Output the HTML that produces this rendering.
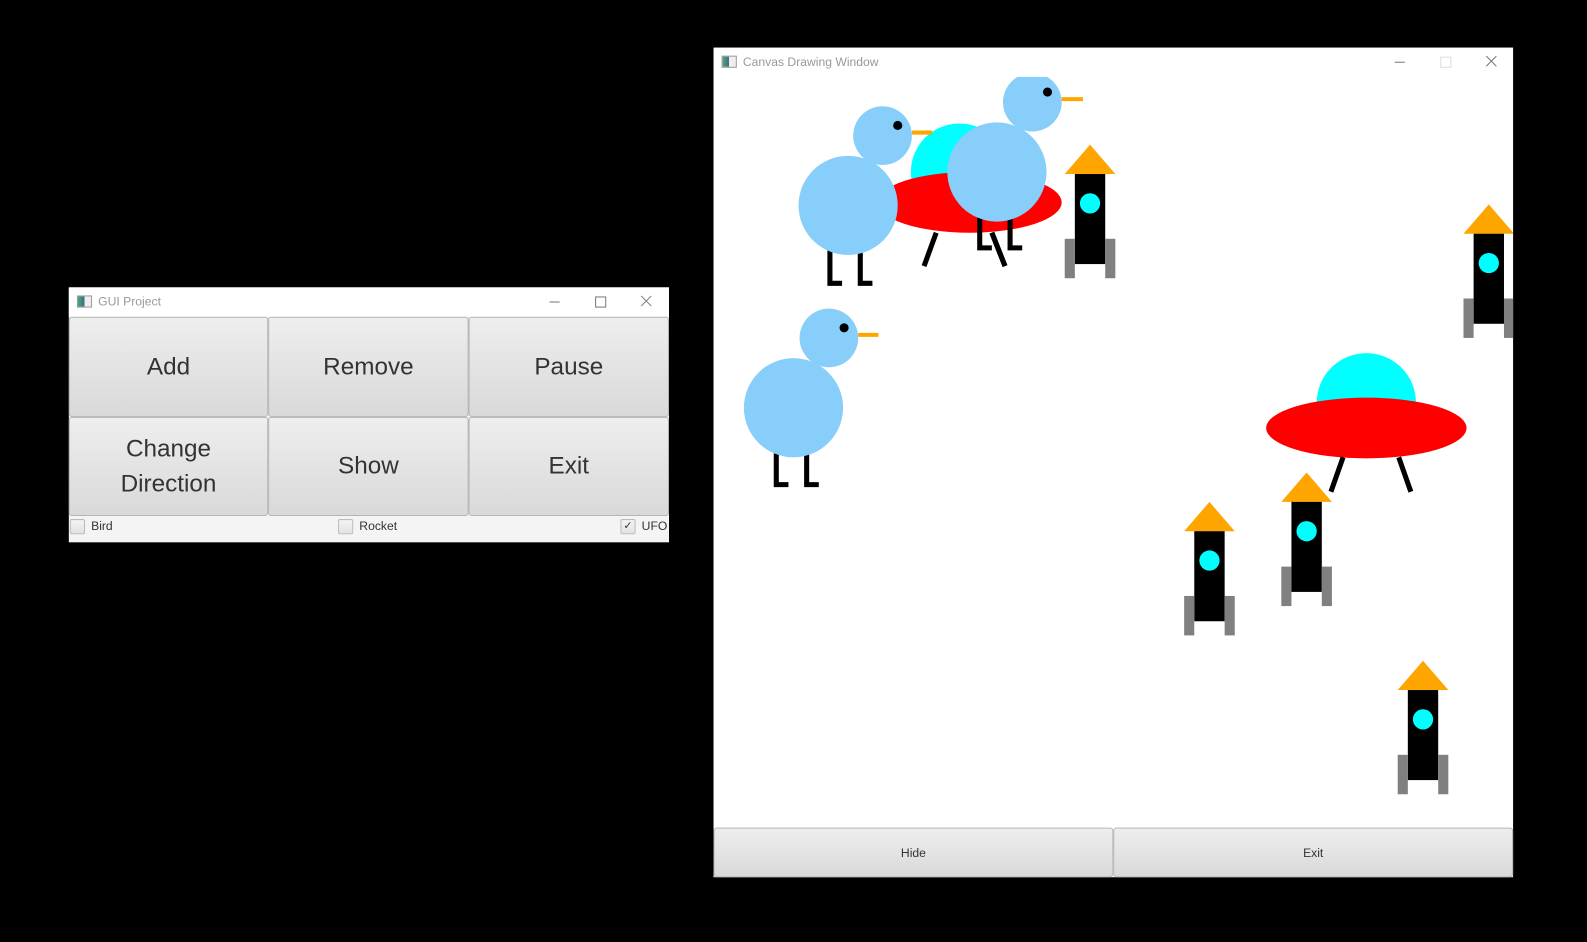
<!DOCTYPE html>
<html><head><style>
html,body{margin:0;padding:0;background:#000;width:1587px;height:942px;overflow:hidden}
#wrap{position:absolute;left:0;top:0;width:1568px;height:931px;transform:scale(1.0121,1.0118);transform-origin:0 0;font-family:"Liberation Sans",sans-serif}
.win{position:absolute;background:#fff}
.title{position:absolute;left:0;top:0;right:0;height:29px;font-size:12px;color:#999}
.title .ic{position:absolute;left:8px;top:8px;width:13px;height:10px;border:1px solid #999;background:linear-gradient(90deg,#4a7 0,#468 50%,#eee 50%)}
.title .t{position:absolute;left:29px;top:7px}
.ln{position:absolute;background:#777}
.btn{position:absolute;box-sizing:border-box;border:1px solid #b5b5b5;border-radius:3px;background:linear-gradient(#eeeeee,#d9d9d9);display:flex;align-items:center;justify-content:center;text-align:center;color:#333}
.cb{position:absolute;top:0;font-size:12px;color:#333;display:flex;align-items:center;height:20px}
.cb i{display:inline-block;width:13px;height:13px;border:1px solid #bbb;background:linear-gradient(#f4f4f4,#e2e2e2);margin-right:6px;border-radius:2px;position:relative;font-style:normal;font-size:11px;line-height:13px;text-align:center}
</style></head><body><div id="wrap">

<div class="win" style="left:68px;top:284px;width:593px;height:252px;background:#f4f4f4">
  <div class="title" style="background:#fff"><div class="ic"></div><div class="t">GUI Project</div>
    <div class="ln" style="left:475px;top:14px;width:10px;height:1px"></div>
    <div style="position:absolute;left:520px;top:9px;width:9px;height:9px;border:1px solid #777"></div>
    <svg style="position:absolute;left:565px;top:8px" width="11" height="11"><path d="M0.5 0.5L10.5 10.5M10.5 0.5L0.5 10.5" stroke="#777" stroke-width="1"/></svg></div>
  <div class="btn" style="left:0;top:29px;width:197px;height:99px;font-size:24px">Add</div>
  <div class="btn" style="left:197px;top:29px;width:198px;height:99px;font-size:24px">Remove</div>
  <div class="btn" style="left:395px;top:29px;width:198px;height:99px;font-size:24px">Pause</div>
  <div class="btn" style="left:0;top:128px;width:197px;height:98px;font-size:24px;line-height:35px">Change<br>Direction</div>
  <div class="btn" style="left:197px;top:128px;width:198px;height:98px;font-size:24px">Show</div>
  <div class="btn" style="left:395px;top:128px;width:198px;height:98px;font-size:24px">Exit</div>
  <div class="cb" style="left:1px;top:226px"><i></i>Bird</div>
  <div class="cb" style="left:266px;top:226px"><i></i>Rocket</div>
  <div class="cb" style="left:545px;top:226px"><i>&#10003;</i>UFO</div>
</div>

<div class="win" style="left:705px;top:47px;width:790px;height:820px">
  <div class="title"><div class="ic"></div><div class="t">Canvas Drawing Window</div>
    <div class="ln" style="left:673px;top:14px;width:10px;height:1px"></div>
    <div style="position:absolute;left:718px;top:9px;width:9px;height:9px;border:1px solid #ddd"></div>
    <svg style="position:absolute;left:763px;top:8px" width="11" height="11"><path d="M0.5 0.5L10.5 10.5M10.5 0.5L0.5 10.5" stroke="#777" stroke-width="1"/></svg></div>
  <div class="btn" style="left:0;top:771px;width:395px;height:49px;font-size:12px">Hide</div>
  <div class="btn" style="left:395px;top:771px;width:395px;height:49px;font-size:12px">Exit</div>
</div>

<svg style="position:absolute;left:0;top:0" width="1568" height="931">
<defs><clipPath id="c"><rect x="706" y="76" width="789" height="742"/></clipPath>
<g id="rk"><polygon points="0,0 -25,29 25,29" fill="#ffa500"/><rect x="-15" y="29" width="30" height="89" fill="#000"/><circle cx="0" cy="58" r="10" fill="#0ff"/><rect x="-25" y="93" width="10" height="39" fill="#808080"/><rect x="15" y="93" width="10" height="39" fill="#808080"/></g>
</defs>
<g clip-path="url(#c)">
<circle cx="948" cy="170" r="48" fill="#0ff"/>
<ellipse cx="958" cy="200" rx="91" ry="30" fill="#f00"/>
<g stroke="#000" stroke-width="5"><line x1="925" y1="230" x2="913" y2="263"/><line x1="980" y1="230" x2="993" y2="263"/></g>
<g stroke="#000" stroke-width="5" fill="none"><polyline points="820,245 820,280 832,280"/><polyline points="850,245 850,280 862,280"/></g>
<circle cx="838" cy="203" r="49" fill="#87cefa"/><circle cx="872" cy="134" r="29" fill="#87cefa"/><circle cx="887" cy="124" r="4.5" fill="#000"/>
<line x1="901" y1="131" x2="921" y2="131" stroke="#ffa500" stroke-width="4"/>
<g stroke="#000" stroke-width="5" fill="none"><polyline points="968,210 968,245 980,245"/><polyline points="998,210 998,245 1010,245"/></g>
<line x1="980" y1="230" x2="993" y2="263" stroke="#000" stroke-width="5"/>
<circle cx="985" cy="170" r="49" fill="#87cefa"/><circle cx="1020" cy="101" r="29" fill="#87cefa"/><circle cx="1035" cy="91" r="4.5" fill="#000"/>
<line x1="1049" y1="98" x2="1070" y2="98" stroke="#ffa500" stroke-width="4"/>
<g stroke="#000" stroke-width="5" fill="none"><polyline points="767,445 767,479 779,479"/><polyline points="797,445 797,479 809,479"/></g>
<circle cx="784" cy="403" r="49" fill="#87cefa"/><circle cx="819" cy="334" r="29" fill="#87cefa"/><circle cx="834" cy="324" r="4.5" fill="#000"/>
<line x1="848" y1="331" x2="868" y2="331" stroke="#ffa500" stroke-width="4"/>
<circle cx="1350" cy="398" r="49" fill="#0ff"/>
<ellipse cx="1350" cy="423" rx="99" ry="30" fill="#f00"/>
<g stroke="#000" stroke-width="5"><line x1="1327" y1="452" x2="1315" y2="486"/><line x1="1382" y1="452" x2="1394" y2="486"/></g>
<use href="#rk" x="1077" y="143"/>
<use href="#rk" x="1471" y="202"/>
<use href="#rk" x="1195" y="496"/>
<use href="#rk" x="1291" y="467"/>
<use href="#rk" x="1406" y="653"/>
</g>
</svg>
</div></body></html>
